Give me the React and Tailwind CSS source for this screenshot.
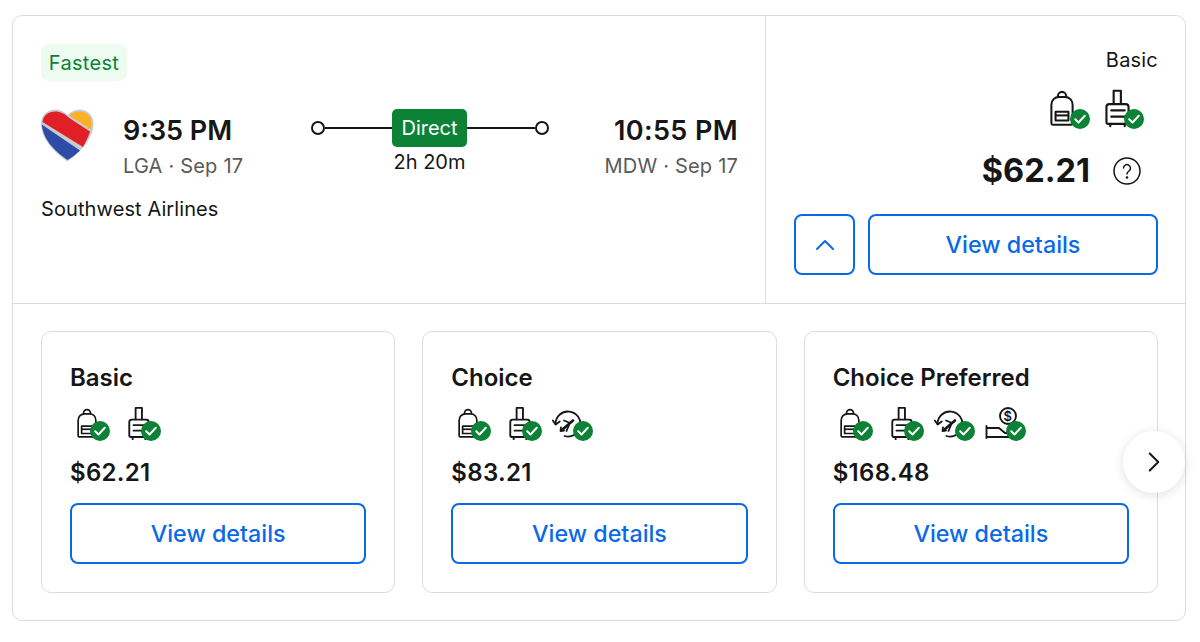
import { ChevronRight, ChevronUp } from 'lucide-react'

const FONT = 'font-["Inter","Liberation_Sans",sans-serif]'

function Check({ className }) {
  return (
    <svg viewBox="0 0 20 20" className={`absolute w-[20px] h-[20px] ${className}`}>
      <circle cx="10" cy="10" r="10" fill="#0b8235" />
      <path d="M5.200 10.300l3.300 3.200 6.300-6.800" fill="none" stroke="#fff" strokeWidth="2" strokeLinecap="round" strokeLinejoin="round" />
    </svg>
  )
}

function BackpackSvg({ className }) {
  return (
    <svg viewBox="0 0 26 38" className={`absolute ${className}`} fill="none" stroke="#161616" strokeWidth="2.200" strokeLinejoin="round">
      <path d="M8.500 7V5.500a4.500 4.500 0 0 1 9 0V7" />
      <path d="M1.500 35V15c0-5 3.500-8.500 8.500-8.500h6c5 0 8.500 3.500 8.500 8.500v20a1.500 1.500 0 0 1-1.500 1.500H3A1.500 1.500 0 0 1 1.500 35z" />
      <path d="M6 22.500h14v9.500H6z" />
      <path d="M6 26.500h14" />
    </svg>
  )
}

function SuitcaseSvg({ className }) {
  return (
    <svg viewBox="0 0 26 40" className={`absolute ${className}`} fill="none" stroke="#161616" strokeWidth="2.200" strokeLinejoin="round" strokeLinecap="round">
      <path d="M9 15V1.500h7.500V15" />
      <path d="M4.500 15.500h17a3 3 0 0 1 3 3V34a2 2 0 0 1-2 2h-19a2 2 0 0 1-2-2V18.500a3 3 0 0 1 3-3z" />
      <path d="M6.500 22h14M6.500 28.500h14" />
      <path d="M5.500 36v2.500M20.500 36v2.500" />
    </svg>
  )
}

// big pair in the price column, 54px step
function BigIcon({ kind }) {
  return (
    <div className="relative w-[54px] h-[40px]">
      {kind === 'bag'
        ? <BackpackSvg className="left-0 top-[1px] w-[24px] h-[37px]" />
        : <SuitcaseSvg className="left-[1px] top-0 w-[25px] h-[39px]" />}
      <Check className="left-[20px] top-[20px]" />
    </div>
  )
}

// small row in the fare cards, 51px step
function SmallIcon({ kind }) {
  return (
    <div className="relative w-[51px] h-[37px]">
      {kind === 'bag' && <BackpackSvg className="left-0 top-[4px] w-[20px] h-[31px]" />}
      {kind === 'case' && <SuitcaseSvg className="left-0 top-[2px] w-[22px] h-[35px]" />}
      {kind === 'flex' && (
        <svg viewBox="0 0 30 30" className="absolute -left-[8px] top-[5px] w-[30px] h-[30px]" fill="none" stroke="#161616" strokeWidth="1.800" strokeLinecap="round" strokeLinejoin="round">
          <path d="M3.500 15a12.500 12.500 0 1 1 9 12" />
          <path d="M.8 11.500l2.900 4 4-3" />
          <path d="M10.500 20.500L21 11.500" strokeWidth="2.600" />
          <path d="M12 11.500l6 2.500M14.500 22l2.500-6M9 18.500l-.5 3.500 3.500-.5" />
        </svg>
      )}
      {kind === 'seat' && (
        <>
          <svg viewBox="0 0 40 34" className="absolute -left-[8px] top-[3px] w-[40px] h-[34px]" fill="none" stroke="#161616" strokeWidth="1.900" strokeLinecap="round" strokeLinejoin="round">
            <circle cx="23" cy="9" r="8" />
            <path d="M1.500 19v12M1.500 21H14l6 5h5M1.500 30H26" />
          </svg>
          <span className="absolute left-[10px] top-[4px] w-[10px] text-center text-[13px] leading-[16px] font-semibold text-[#161616]">$</span>
        </>
      )}
      <Check className="left-[13px] top-[17px]" />
    </div>
  )
}

function Heart() {
  return (
    <svg viewBox="0 0 54 54" className="w-[54px] h-[54px] shrink-0 -ml-[1px] mr-[1px]">
      <path d="M27.500 52.500C17 45 1 32 1 14.500 1 6 8 .5 15 .5c5 0 9.500 2 12.500 5.500 3-3 7-5.500 12-5.500 7 0 14 5 14 14 0 17-16 30.500-26 38z" fill="#c9cbce" />
      <path d="M2.500 13C3 6.500 9 2.500 15 2.500c5.500 0 10 2.500 13.500 6L50 22.500c-1.500 5-4 10-7 15.500z" fill="#e01f27" />
      <path d="M29.500 6.500C32 4 35.500 2.500 39.500 2.500c6.500 0 12 4.500 12 12.500 0 1.700-.3 3.700-.7 5.500z" fill="#fdb022" />
      <path d="M1.800 15.500L40 41.500C35.500 46 31 49 27.500 51 16 43 3.500 32 1.800 15.500z" fill="#2f4ba8" />
    </svg>
  )
}

function Fare({ name, price, icons }) {
  return (
    <div className="flex-1 h-[262px] border border-[#dcdcdc] rounded-[10px] px-[28px] pt-[31px]">
      <div className="text-[24px] leading-[30px] font-semibold text-[#161616]">{name}</div>
      <div className="flex mt-[11px] ml-[7px] h-[37px]">
        {icons.map((k) => <SmallIcon key={k} kind={k} />)}
      </div>
      <div className="text-[24px] leading-[30px] font-semibold text-[#161616] mt-[17px] tracking-[0.3px]">{price}</div>
      <button className="w-full h-[61px] mt-[15px] pt-[2px] border-2 border-[#0a6ae6] rounded-[8px] text-[23.300px] font-medium text-[#0a6ae6]">View details</button>
    </div>
  )
}

export default function App() {
  return (
    <div className={`w-[1200px] h-[642px] bg-white pt-[15px] pl-[12px] overflow-hidden ${FONT}`}>
      <div className="relative w-[1174px] h-[606px] border border-[#dcdcdc] rounded-[10px]">
        <div className="flex h-[288px] border-b border-[#dcdcdc]">
          <div className="w-[753px] border-r border-[#dcdcdc] pl-[28px] pr-[27px] pt-[28px]">
            <div className="w-[86px] h-[37px] rounded-[8px] bg-[#edfbf0] text-[#0b8235] text-[20px] leading-[39px] text-center tracking-[0.3px]">Fastest</div>
            <div className="flex items-start mt-[28px]">
              <Heart />
              <div className="ml-[28px] w-[150px] pt-[5px]">
                <div className="text-[27px] leading-[34px] font-semibold text-[#161616]">9:35 PM</div>
                <div className="text-[20px] leading-[26px] text-[#5a5a5a] mt-[5px] tracking-[0.2px]">LGA · Sep 17</div>
              </div>
              <div className="flex-1 flex flex-col items-center -ml-[2px]">
                <div className="flex items-center w-[238px]">
                  <span className="w-[14px] h-[14px] rounded-full border-2 border-[#161616] shrink-0" />
                  <span className="flex-1 h-[2px] bg-[#161616]" />
                  <span className="px-[9px] h-[38px] rounded-[5px] bg-[#0b8235] text-white text-[20px] leading-[38px]">Direct</span>
                  <span className="flex-1 h-[2px] bg-[#161616]" />
                  <span className="w-[14px] h-[14px] rounded-full border-2 border-[#161616] shrink-0" />
                </div>
                <div className="text-[20px] leading-[26px] text-[#161616] mt-[2px]">2h 20m</div>
              </div>
              <div className="w-[150px] text-right pt-[5px]">
                <div className="text-[27px] leading-[34px] font-semibold text-[#161616] tracking-[0.4px]">10:55 PM</div>
                <div className="text-[20px] leading-[26px] text-[#5a5a5a] mt-[5px] whitespace-nowrap tracking-[0.2px]">MDW · Sep 17</div>
              </div>
            </div>
            <div className="text-[20px] leading-[26px] text-[#161616] mt-[17px] tracking-[0.1px]">Southwest Airlines</div>
          </div>
          <div className="flex-1 flex flex-col items-end pl-[28px] pr-[27px] pt-[31px]">
            <div className="text-[20px] leading-[26px] text-[#161616] tracking-[0.2px]">Basic</div>
            <div className="flex mt-[16px] h-[40px]">
              <BigIcon kind="bag" />
              <BigIcon kind="case" />
            </div>
            <div className="flex items-center mt-[20px] mr-[17px] h-[44px]">
              <span className="text-[32.500px] font-bold text-[#161616]">$62.21</span>
              <svg viewBox="0 0 28 28" className="w-[28px] h-[28px] ml-[23px]" fill="none" stroke="#161616" strokeWidth="1.500" strokeLinecap="round">
                <circle cx="14" cy="14" r="13" />
                <path d="M10.500 11a3.500 3.500 0 1 1 5.500 3c-1.300.9-2 1.600-2 3" />
                <circle cx="14" cy="20.500" r=".6" fill="#161616" />
              </svg>
            </div>
            <div className="flex gap-[13px] w-full mt-[21px]">
              <button className="w-[61px] h-[61px] border-2 border-[#0a6ae6] rounded-[8px] flex items-center justify-center text-[#0a6ae6] shrink-0">
                <ChevronUp className="w-[32px] h-[32px]" strokeWidth={1.500} />
              </button>
              <button className="flex-1 h-[61px] pt-[2px] border-2 border-[#0a6ae6] rounded-[8px] text-[23.300px] font-medium text-[#0a6ae6]">View details</button>
            </div>
          </div>
        </div>
        <div className="flex gap-[27px] pl-[28px] pr-[27px] pt-[27px]">
          <Fare name="Basic" price="$62.21" icons={['bag', 'case']} />
          <Fare name="Choice" price="$83.21" icons={['bag', 'case', 'flex']} />
          <Fare name="Choice Preferred" price="$168.48" icons={['bag', 'case', 'flex', 'seat']} />
        </div>
        <button className="absolute left-[1110px] top-[415px] w-[62px] h-[62px] rounded-full bg-white shadow-[0_2px_12px_rgba(0,0,0,0.12)] flex items-center justify-center text-[#161616]">
          <ChevronRight className="w-[34px] h-[34px]" strokeWidth={1.400} />
        </button>
      </div>
    </div>
  )
}
